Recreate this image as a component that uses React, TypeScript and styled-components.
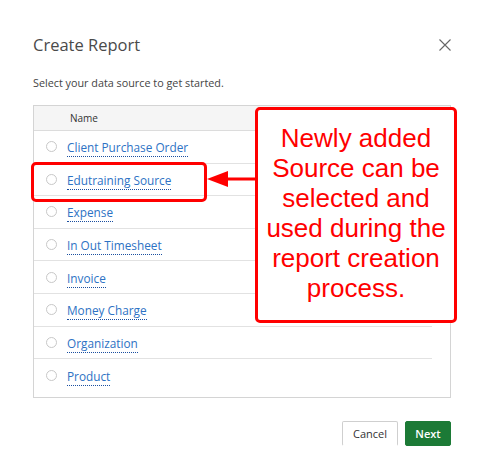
import styled, { createGlobalStyle } from "styled-components";

const sources = [
  "Client Purchase Order",
  "Edutraining Source",
  "Expense",
  "In Out Timesheet",
  "Invoice",
  "Money Charge",
  "Organization",
  "Product",
];

function App() {
  return (
    <>
      <GlobalStyle />
      <Dialog>
        <Header>
          <Title>Create Report</Title>
          <CloseButton aria-label="Close">
            <svg width="12" height="12" viewBox="0 0 12 12">
              <path d="M0.5 0.5 L11.5 11.5 M11.5 0.5 L0.5 11.5" stroke="#666" strokeWidth="1.1" />
            </svg>
          </CloseButton>
        </Header>
        <Subtitle>Select your data source to get started.</Subtitle>

        <Table>
          <HeadRow>Name</HeadRow>
          <Body>
            {sources.map((name) => (
              <Row key={name}>
                <Radio />
                <SourceLink>{name}</SourceLink>
              </Row>
            ))}
          </Body>
        </Table>

        <Footer>
          <CancelButton>Cancel</CancelButton>
          <NextButton>Next</NextButton>
        </Footer>

        <Highlight />
        <Arrow width="50" height="20" viewBox="0 0 50 20">
          <polygon points="0,10 21,2 21,18" fill="#ff0000" />
          <rect x="20" y="8.5" width="30" height="3" fill="#ff0000" />
        </Arrow>
        <Callout>
          Newly added
          <br />
          Source can be
          <br />
          selected and
          <br />
          used during the
          <br />
          report creation
          <br />
          process.
        </Callout>
      </Dialog>
    </>
  );
}

export default App;

const GlobalStyle = createGlobalStyle`
  body {
    margin: 0;
    background: #ffffff;
    font-family: "Open Sans", "Noto Sans", sans-serif;
  }
`;

const Dialog = styled.div`
  position: relative;
  box-sizing: border-box;
  display: flex;
  flex-direction: column;

  width: 477px;
  height: 474px;
  padding: 30px 26px 0 33px;

  background: #ffffff;
`;

const Header = styled.div`
  display: flex;
  justify-content: space-between;
  align-items: center;
  height: 28px;
`;

const Title = styled.h1`
  margin: 0;
  font-size: 16.5px;
  font-weight: 400;
  color: #4a4a4a;
`;

const CloseButton = styled.button`
  display: flex;
  padding: 0;
  border: none;
  background: none;
  margin-top: 1px;
`;

const Subtitle = styled.p`
  margin: 17px 0 0;
  font-size: 10.8px;
  line-height: 16px;
  color: #444;
`;

const Table = styled.div`
  box-sizing: border-box;
  display: flex;
  flex-direction: column;

  height: 293px;
  margin-top: 14px;

  border: 1px solid #d4d4d4;
`;

const HeadRow = styled.div`
  display: flex;
  align-items: center;
  height: 24px;
  padding-left: 36px;

  background: #f5f5f5;
  border-bottom: 1px solid #dcdcdc;

  font-size: 10px;
  color: #333;
`;

const Body = styled.div`
  padding-right: 18px;
`;

const Row = styled.div`
  box-sizing: border-box;
  display: flex;
  align-items: center;
  gap: 10px;

  height: 32.6px;
  padding-left: 12px;

  border-bottom: 1px solid #e2e2e2;

  &:last-child {
    border-bottom: none;
  }
`;

const Radio = styled.span`
  box-sizing: border-box;
  width: 11px;
  height: 11px;
  border: 1px solid #c8c8c8;
  border-radius: 50%;
  background: #ffffff;
`;

const SourceLink = styled.a`
  margin-top: 4px;
  padding-bottom: 1px;
  border-bottom: 1px dotted #1a4fa0;
  font-size: 11.8px;
  line-height: 15px;
  color: #2d72c4;
  cursor: pointer;
`;

const Footer = styled.div`
  display: flex;
  justify-content: flex-end;
  gap: 7px;
  margin-top: 23px;
`;

const ButtonBase = styled.button`
  box-sizing: border-box;
  height: 25px;
  padding: 0;
  border-radius: 2px;
  font-family: "Open Sans", "Noto Sans", sans-serif;
  font-size: 11px;
`;

const CancelButton = styled(ButtonBase)`
  width: 56px;
  background: #ffffff;
  color: #333;
  border: 1px solid #cfcfcf;
  border-bottom-color: transparent;
`;

const NextButton = styled(ButtonBase)`
  width: 46px;
  background: #1c7a36;
  color: #ffffff;
  border: 1px solid #1c7a36;
  font-weight: 600;
`;

const Highlight = styled.div`
  position: absolute;
  left: 31px;
  top: 162px;
  box-sizing: border-box;
  width: 176px;
  height: 40px;
  border: 3px solid #ff0000;
  border-radius: 5px;
`;

const Arrow = styled.svg`
  position: absolute;
  left: 207px;
  top: 169px;
`;

const Callout = styled.div`
  position: absolute;
  left: 255px;
  top: 107px;
  box-sizing: border-box;
  display: flex;
  align-items: center;
  justify-content: center;

  width: 202px;
  height: 216px;
  padding-bottom: 4px;

  border: 3px solid #ff0000;
  border-radius: 5px;
  background: #ffffff;

  font-family: "Liberation Sans", Arial, sans-serif;
  font-size: 26px;
  line-height: 30px;
  text-align: center;
  color: #ff0000;
`;
